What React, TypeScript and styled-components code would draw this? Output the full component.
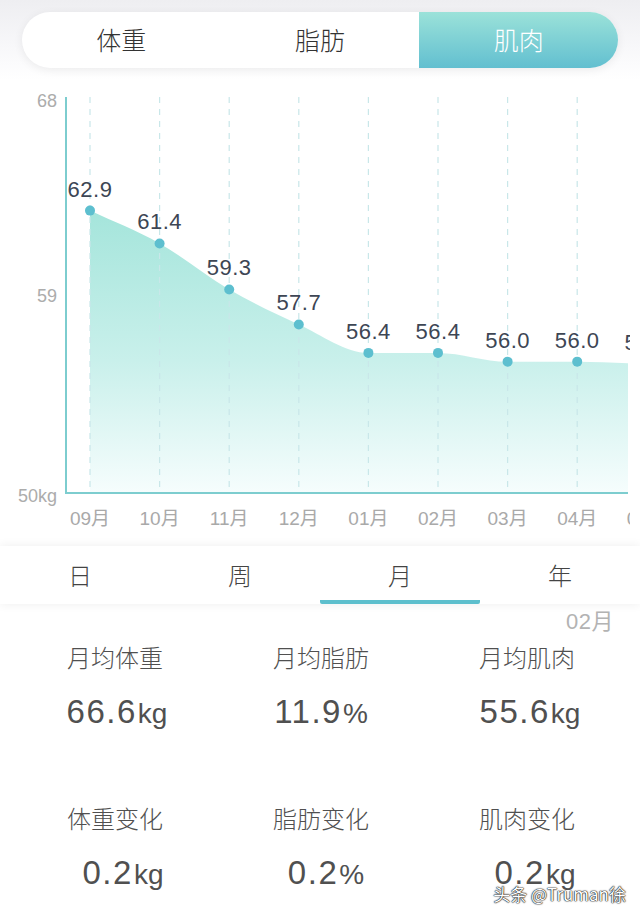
import React from "react";
import styled, { createGlobalStyle } from "styled-components";

const GlobalStyle = createGlobalStyle`
  html, body {
    margin: 0;
    padding: 0;
    background: #ffffff;
  }
  body {
    font-family: "Liberation Sans", "Noto Sans CJK SC", sans-serif;
  }
`;

const Page = styled.div`
  position: relative;
  width: 640px;
  height: 914px;
  overflow: hidden;
  background: #ffffff;
`;

const Header = styled.div`
  height: 80px;
  padding: 12px 22px 0;
  box-sizing: border-box;
  background: linear-gradient(#eeeef1, #f8f8fa 60%, #ffffff);
`;

const Segmented = styled.div`
  display: grid;
  grid-template-columns: repeat(3, 1fr);
  height: 56px;
  border-radius: 28px;
  overflow: hidden;
  background: #ffffff;
  box-shadow: 0 2px 10px rgba(0, 0, 0, 0.07);
`;

const Segment = styled.div<{ $active?: boolean }>`
  display: flex;
  align-items: center;
  justify-content: center;
  padding-bottom: 2px;
  font-family: "Noto Sans CJK SC", sans-serif;
  font-size: 25px;
  font-weight: 300;
  color: ${(p) => (p.$active ? "#ffffff" : "#333333")};
  background: ${(p) =>
    p.$active ? "linear-gradient(#9be2d9, #62bfd0)" : "transparent"};
`;

const ChartWrap = styled.div`
  height: 466px;
  width: 630px;
  overflow: hidden;
`;

const TabBar = styled.div`
  position: relative;
  display: grid;
  grid-template-columns: repeat(4, 1fr);
  height: 58px;
  background: #ffffff;
  box-shadow: 0 0 10px rgba(0, 0, 0, 0.07);
`;

const Tab = styled.div<{ $active?: boolean }>`
  display: flex;
  align-items: center;
  justify-content: center;
  padding-top: 2px;
  font-family: "Noto Sans CJK SC", sans-serif;
  font-size: 24px;
  font-weight: 300;
  color: #444444;
  border-bottom: 4px solid transparent;
  ${(p) =>
    p.$active &&
    `
    border-bottom-color: #5dbfcd;
    border-radius: 0 0 2px 2px;
  `}
`;

const MonthLabel = styled.div`
  margin-top: 4px;
  padding-right: 26px;
  height: 28px;
  line-height: 28px;
  text-align: right;
  font-family: "Liberation Sans", "Noto Sans CJK SC", sans-serif;
  font-size: 22px;
  letter-spacing: 0.5px;
  color: #b3b3b3;
`;

const Stats = styled.div`
  display: grid;
  grid-template-columns: repeat(3, 206px);
  row-gap: 68px;
  padding: 5px 12px 0;
`;

const Stat = styled.div`
  display: flex;
  flex-direction: column;
  align-items: center;
  gap: 19px;
`;

const StatLabel = styled.div`
  font-family: "Noto Sans CJK SC", sans-serif;
  font-size: 24px;
  font-weight: 300;
  line-height: 32px;
  color: #505050;
`;

const StatValue = styled.div<{ $shift?: number }>`
  line-height: 40px;
  font-family: "Liberation Sans", sans-serif;
  font-size: 33px;
  letter-spacing: 1.5px;
  color: #505050;
  transform: translateX(${(p) => p.$shift ?? 0}px);
`;

const Unit = styled.span`
  font-size: 28px;
  letter-spacing: 0;
  margin-left: 1px;
`;

const Watermark = styled.div`
  position: absolute;
  right: 14px;
  bottom: 8px;
  font-family: "Noto Sans CJK SC", sans-serif;
  font-size: 17px;
  color: #ffffff;
  text-shadow: 0 0 1px #000, 0 0 1px #000, 0 0 2px rgba(0, 0, 0, 0.7);
`;

const months = ["09月", "10月", "11月", "12月", "01月", "02月", "03月", "04月", "05月"];
const values = [62.9, 61.4, 59.3, 57.7, 56.4, 56.4, 56.0, 56.0, 55.9];

const xOf = (i: number) => 90 + i * 69.6;
const yOf = (v: number) => 493 - (v - 50) * 21.89;

function monotonePath(pts: { x: number; y: number }[]) {
  const n = pts.length;
  const s: number[] = [];
  for (let i = 0; i < n - 1; i++) {
    s.push((pts[i + 1].y - pts[i].y) / (pts[i + 1].x - pts[i].x));
  }
  const m: number[] = pts.map((_, i) => {
    if (i === 0) return s[0];
    if (i === n - 1) return s[n - 2];
    const a = s[i - 1];
    const b = s[i];
    if (a * b <= 0) return 0;
    const h0 = pts[i].x - pts[i - 1].x;
    const h1 = pts[i + 1].x - pts[i].x;
    const p = (a * h1 + b * h0) / (h0 + h1);
    return Math.sign(a) * Math.min(Math.abs(a), Math.abs(b), 0.5 * Math.abs(p)) * 2;
  });
  let d = `M${pts[0].x},${pts[0].y}`;
  for (let i = 0; i < n - 1; i++) {
    const h = (pts[i + 1].x - pts[i].x) / 3;
    d += ` C${pts[i].x + h},${pts[i].y + m[i] * h} ${pts[i + 1].x - h},${
      pts[i + 1].y - m[i + 1] * h
    } ${pts[i + 1].x},${pts[i + 1].y}`;
  }
  return d;
}

function Chart() {
  const pts = values.map((v, i) => ({ x: xOf(i), y: yOf(v) }));
  const line = monotonePath(pts);
  const area = `${line} L${pts[pts.length - 1].x},493 L${pts[0].x},493 Z`;

  return (
    <svg width="630" height="466" viewBox="0 80 630 466">
      <defs>
        <linearGradient id="fill" x1="0" y1="200" x2="0" y2="493" gradientUnits="userSpaceOnUse">
          <stop offset="0" stopColor="#a2e4da" />
          <stop offset="0.55" stopColor="#c9f0eb" />
          <stop offset="1" stopColor="#f6fdfd" />
        </linearGradient>
        <clipPath id="plot">
          <rect x="0" y="80" width="628" height="420" />
        </clipPath>
      </defs>

      <path d={area} fill="url(#fill)" clipPath="url(#plot)" />

      {pts.map((p, i) => (
        <line
          key={`d${i}`}
          x1={p.x}
          x2={p.x}
          y1={97}
          y2={493}
          stroke="#c9e7e9"
          strokeWidth={1.2}
          strokeDasharray="6 6"
        />
      ))}

      <line x1={66} x2={66} y1={97} y2={494} stroke="#7dcdcf" strokeWidth={2} />
      <line x1={65} x2={628} y1={493} y2={493} stroke="#7dcdcf" strokeWidth={2} />

      <g fontFamily="'Liberation Sans', sans-serif" fontSize="18" fill="#acacac" textAnchor="end">
        <text x={57} y={107}>68</text>
        <text x={57} y={302}>59</text>
        <text x={57} y={502}>50kg</text>
      </g>

      {pts.map((p, i) => (
        <g key={`p${i}`}>
          <circle cx={p.x} cy={p.y} r={5} fill="#5dbfcf" />
          <text
            x={p.x}
            y={p.y - 14}
            textAnchor="middle"
            fontFamily="'Liberation Sans', sans-serif"
            fontSize="22"
            letterSpacing="0.5"
            fill="#3d4654"
          >
            {values[i].toFixed(1)}
          </text>
          <text
            x={p.x}
            y={525}
            textAnchor="middle"
            fontFamily="'Liberation Sans', 'Noto Sans CJK SC', sans-serif"
            fontSize="19"
            fill="#a9a9a9"
          >
            {months[i]}
          </text>
        </g>
      ))}
    </svg>
  );
}

const stats = [
  { label: "月均体重", num: "66.6", unit: "kg", shift: 2 },
  { label: "月均脂肪", num: "11.9", unit: "%", shift: 0 },
  { label: "月均肌肉", num: "55.6", unit: "kg", shift: 3 },
  { label: "体重变化", num: "0.2", unit: "kg", shift: 8 },
  { label: "脂肪变化", num: "0.2", unit: "%", shift: 5 },
  { label: "肌肉变化", num: "0.2", unit: "kg", shift: 8 },
];

export default function App() {
  return (
    <Page>
      <GlobalStyle />
      <Header>
        <Segmented>
          <Segment>体重</Segment>
          <Segment>脂肪</Segment>
          <Segment $active>肌肉</Segment>
        </Segmented>
      </Header>

      <ChartWrap>
        <Chart />
      </ChartWrap>

      <TabBar>
        <Tab>日</Tab>
        <Tab>周</Tab>
        <Tab $active>月</Tab>
        <Tab>年</Tab>
      </TabBar>

      <MonthLabel>02月</MonthLabel>

      <Stats>
        {stats.map((s) => (
          <Stat key={s.label}>
            <StatLabel>{s.label}</StatLabel>
            <StatValue $shift={s.shift}>
              {s.num}
              <Unit>{s.unit}</Unit>
            </StatValue>
          </Stat>
        ))}
      </Stats>

      <Watermark>头条 @Truman徐</Watermark>
    </Page>
  );
}
